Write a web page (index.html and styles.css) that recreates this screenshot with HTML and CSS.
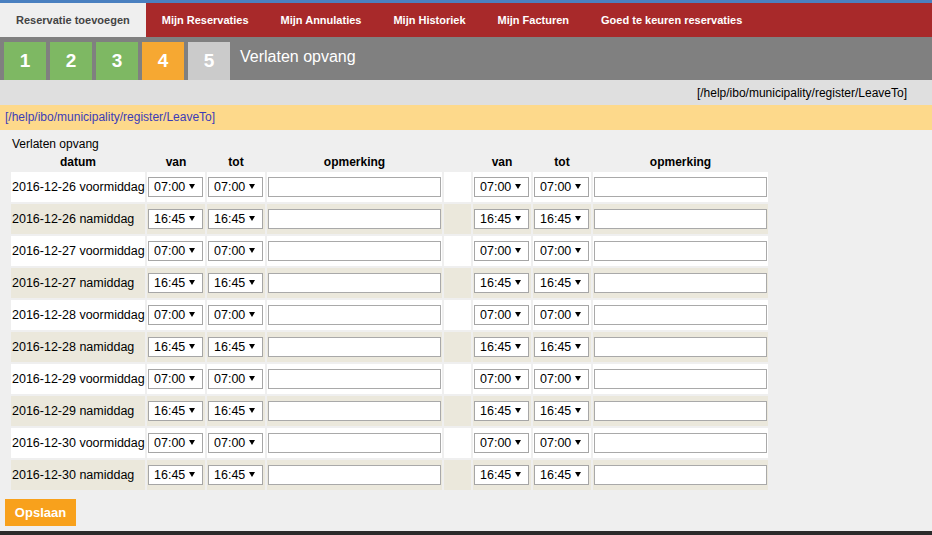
FILE: index.html
```html
<!DOCTYPE html>
<html lang="nl">
<head>
<meta charset="utf-8">
<title>Verlaten opvang</title>
<link rel="stylesheet" href="styles.css">
</head>
<body>
<div class="topline"></div>
<nav class="tabs">
  <a class="tab active" href="#">Reservatie toevoegen</a>
  <a class="tab" href="#">Mijn Reservaties</a>
  <a class="tab" href="#">Mijn Annulaties</a>
  <a class="tab" href="#">Mijn Historiek</a>
  <a class="tab" href="#">Mijn Facturen</a>
  <a class="tab" href="#">Goed te keuren reservaties</a>
</nav>
<div class="steps">
  <div class="step done">1</div>
  <div class="step done">2</div>
  <div class="step done">3</div>
  <div class="step current">4</div>
  <div class="step todo">5</div>
  <h1 class="step-title">Verlaten opvang</h1>
</div>
<div class="helpbar">[/help/ibo/municipality/register/LeaveTo]</div>
<div class="helplink"><a href="#">[/help/ibo/municipality/register/LeaveTo]</a></div>
<main class="content">
  <table class="leave">
    <caption>Verlaten opvang</caption>
    <thead>
      <tr>
        <th class="c-date">datum</th>
        <th class="c-time">van</th>
        <th class="c-time">tot</th>
        <th class="c-note">opmerking</th>
        <th class="c-blank"></th>
        <th class="c-time">van</th>
        <th class="c-time">tot</th>
        <th class="c-note">opmerking</th>
      </tr>
    </thead>
    <tbody id="rows"></tbody>
  </table>
  <button class="save" type="button">Opslaan</button>
</main>
<footer class="footer"></footer>
<script src="app.js"></script>
</body>
</html>
```
FILE: app.js
```js
(function () {
  var days = ["2016-12-26", "2016-12-27", "2016-12-28", "2016-12-29", "2016-12-30"];
  var parts = [["voormiddag", "07:00"], ["namiddag", "16:45"]];
  var body = document.getElementById("rows");
  function sel(v) {
    return '<span class="sel"><select class="time"><option>' + v + '</option></select></span>';
  }
  function note() {
    return '<input class="note" type="text">';
  }
  var html = "";
  days.forEach(function (d) {
    parts.forEach(function (p) {
      html += "<tr>" +
        '<td class="date">' + d + " " + p[0] + "</td>" +
        "<td>" + sel(p[1]) + "</td>" +
        "<td>" + sel(p[1]) + "</td>" +
        "<td>" + note() + "</td>" +
        "<td></td>" +
        "<td>" + sel(p[1]) + "</td>" +
        "<td>" + sel(p[1]) + "</td>" +
        "<td>" + note() + "</td>" +
        "</tr>";
    });
  });
  body.innerHTML = html;
})();
```
FILE: styles.css
```css
* { box-sizing: border-box; }

body {
  margin: 0;
  font-family: "Liberation Sans", Arial, sans-serif;
  font-size: 12px;
  color: #000;
  background: #efefef;
}

.topline {
  height: 3px;
  background: #4a80c0;
}

.tabs {
  display: flex;
  height: 34px;
  background: #a8292a;
}

.tab {
  display: flex;
  align-items: center;
  padding: 0 16px;
  color: #fff;
  font-weight: bold;
  font-size: 11px;
  text-decoration: none;
}

.tab.active {
  background: #efefef;
  color: #444;
}

.steps {
  display: flex;
  align-items: flex-start;
  gap: 4px;
  height: 43px;
  padding: 5px 0 0 4px;
  background: #808080;
}

.step {
  width: 42px;
  height: 38px;
  display: flex;
  align-items: center;
  justify-content: center;
  color: #fff;
  font-weight: bold;
  font-size: 19px;
}

.step.done { background: #7eb863; }
.step.current { background: #f6a832; }
.step.todo { background: #cbcbcb; }

.step-title {
  margin: 0 0 0 6px;
  padding-top: 6px;
  font-size: 16px;
  line-height: 18px;
  font-weight: normal;
  color: #fff;
}

.helpbar {
  height: 25px;
  line-height: 26px;
  padding: 0 25px 0 0;
  text-align: right;
  background: #dfdfdf;
}

.helplink {
  height: 25px;
  line-height: 25px;
  padding-left: 5px;
  background: #fdd98b;
}

.helplink a {
  color: #3c3cb8;
  text-decoration: none;
}

.content {
  padding: 7px 0 5px 0;
}

.leave {
  border-collapse: separate;
  border-spacing: 2px;
  margin-left: 9px;
  table-layout: fixed;
  width: 761px;
}

.leave caption {
  text-align: left;
  padding-left: 3px;
  line-height: 14px;
}

.leave th {
  height: 17px;
  padding: 0;
  font-size: 12px;
  font-weight: bold;
  text-align: center;
}

.c-date { width: 134px; }
.c-time { width: 58px; }
.c-note { width: 175px; }
.c-blank { width: 27px; }

.leave td {
  height: 30px;
  padding: 0 1px;
  vertical-align: middle;
  white-space: nowrap;
  background: #fff;
}

.leave tbody tr:nth-child(even) td {
  background: #ebe8dc;
}

.leave td.date {
  font-size: 12.5px;
}

.sel {
  position: relative;
  display: block;
  width: 55px;
  height: 20px;
}

.sel::after {
  content: "";
  position: absolute;
  right: 8px;
  top: 7px;
  border-left: 3px solid transparent;
  border-right: 3px solid transparent;
  border-top: 5px solid #000;
  pointer-events: none;
}

.time {
  appearance: none;
  -webkit-appearance: none;
  display: block;
  width: 55px;
  height: 20px;
  margin: 0;
  padding: 0 0 0 5px;
  border: 1px solid #a6a6a6;
  border-radius: 0;
  background: #fff;
  font-family: "Liberation Sans", Arial, sans-serif;
  font-size: 12.5px;
  color: #000;
}

.note {
  display: block;
  width: 173px;
  height: 20px;
  margin: 0;
  padding: 0 3px;
  border: 1px solid #a9a9a9;
  border-radius: 0;
  background: #fff;
  font-family: "Liberation Sans", Arial, sans-serif;
  font-size: 13px;
}

.save {
  display: block;
  margin: 7px 0 0 5px;
  width: 71px;
  height: 27px;
  padding: 0;
  border: none;
  background: #f8a11c;
  color: #fff;
  font-family: "Liberation Sans", Arial, sans-serif;
  font-weight: bold;
  font-size: 13px;
}

.footer {
  height: 30px;
  background: #2b2b2b;
}
```
